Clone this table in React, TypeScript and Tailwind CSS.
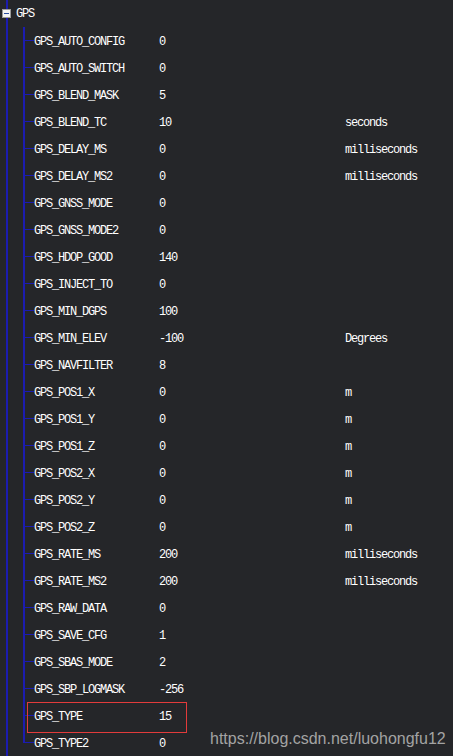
import React from 'react';

type Param = { name: string; value: string; unit?: string };

const params: Param[] = [
  { name: 'GPS_AUTO_CONFIG', value: '0' },
  { name: 'GPS_AUTO_SWITCH', value: '0' },
  { name: 'GPS_BLEND_MASK', value: '5' },
  { name: 'GPS_BLEND_TC', value: '10', unit: 'seconds' },
  { name: 'GPS_DELAY_MS', value: '0', unit: 'milliseconds' },
  { name: 'GPS_DELAY_MS2', value: '0', unit: 'milliseconds' },
  { name: 'GPS_GNSS_MODE', value: '0' },
  { name: 'GPS_GNSS_MODE2', value: '0' },
  { name: 'GPS_HDOP_GOOD', value: '140' },
  { name: 'GPS_INJECT_TO', value: '0' },
  { name: 'GPS_MIN_DGPS', value: '100' },
  { name: 'GPS_MIN_ELEV', value: '-100', unit: 'Degrees' },
  { name: 'GPS_NAVFILTER', value: '8' },
  { name: 'GPS_POS1_X', value: '0', unit: 'm' },
  { name: 'GPS_POS1_Y', value: '0', unit: 'm' },
  { name: 'GPS_POS1_Z', value: '0', unit: 'm' },
  { name: 'GPS_POS2_X', value: '0', unit: 'm' },
  { name: 'GPS_POS2_Y', value: '0', unit: 'm' },
  { name: 'GPS_POS2_Z', value: '0', unit: 'm' },
  { name: 'GPS_RATE_MS', value: '200', unit: 'milliseconds' },
  { name: 'GPS_RATE_MS2', value: '200', unit: 'milliseconds' },
  { name: 'GPS_RAW_DATA', value: '0' },
  { name: 'GPS_SAVE_CFG', value: '1' },
  { name: 'GPS_SBAS_MODE', value: '2' },
  { name: 'GPS_SBP_LOGMASK', value: '-256' },
  { name: 'GPS_TYPE', value: '15' },
  { name: 'GPS_TYPE2', value: '0' },
];

// tree branch: vertical guide + horizontal stub to the label
const Branch: React.FC<{ last?: boolean }> = ({ last }) => (
  <svg width="11" height="27" className="shrink-0">
    <line x1="1" y1="0" x2="1" y2={last ? 14 : 27} stroke="#1c1cb0" strokeWidth="2" />
    <line x1="1" y1="13.5" x2="11" y2="13.5" stroke="#1c1cb0" strokeWidth="1" />
  </svg>
);

export default function App() {
  return (
    <div className="relative w-[453px] h-[756px] overflow-hidden bg-[#252629] text-white font-['Liberation_Mono',monospace] text-[12px] tracking-[-1.2px]">
      <div className="pl-[6px] h-full">
        <div className="border-l-2 border-[#1c1cb0] h-full">
          <div className="flex items-center h-[27px]">
            <div className="ml-[-6px] w-[9px] h-[9px] border border-[#9a9a9a] bg-[#f4f4f4] flex items-center justify-center">
              <div className="w-[5px] h-[1px] bg-[#2a4fa0]" />
            </div>
            <span className="ml-[5px] pt-[1px]">GPS</span>
          </div>
          <div className="ml-[15px]">
            {params.map((p, i) => (
              <div key={p.name} className="relative flex items-center h-[27px]">
                <Branch last={i === params.length - 1} />
                <div className="flex pt-[2px]">
                  <span className="w-[125px] shrink-0">{p.name}</span>
                  <span className="w-[186px] shrink-0">{p.value}</span>
                  <span>{p.unit}</span>
                </div>
                {p.name === 'GPS_TYPE' && (
                  <span className="absolute left-[4px] top-0 w-[160px] h-[31px] border border-[#e23b3b]" />
                )}
              </div>
            ))}
          </div>
        </div>
      </div>
      <div className="absolute left-[210px] top-[727px] font-['Liberation_Sans',Arial,sans-serif] text-[16px] tracking-normal text-[#a3a3a3]">
        https://blog.csdn.net/luohongfu12
      </div>
    </div>
  );
}
